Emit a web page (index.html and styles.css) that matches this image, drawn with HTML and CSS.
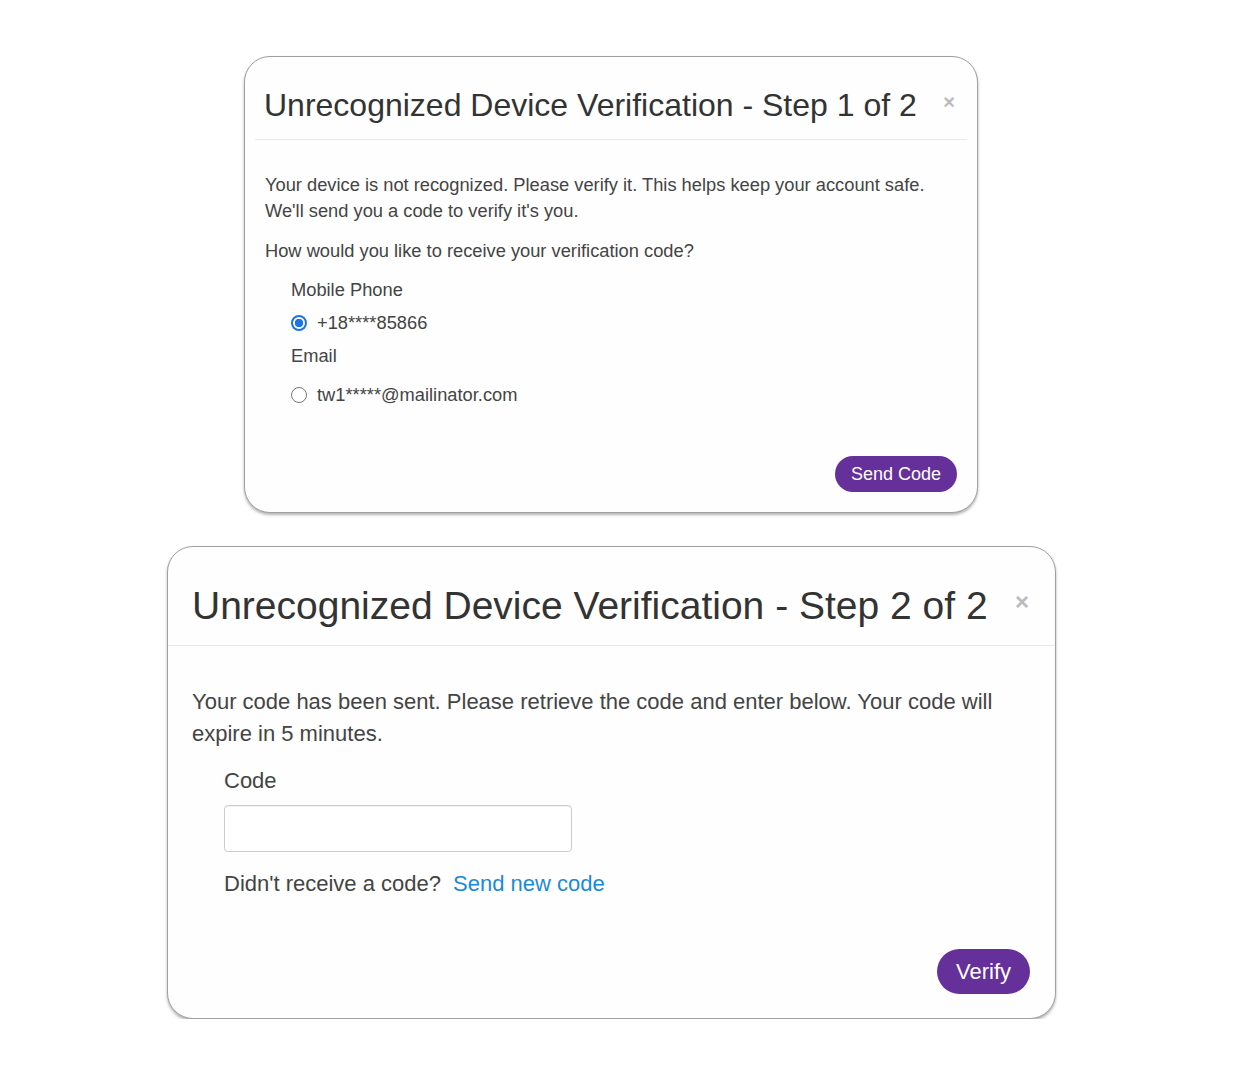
FILE: index.html
```html
<!DOCTYPE html>
<html lang="en">
<head>
    <meta charset="UTF-8">
    <meta name="viewport" content="width=device-width, initial-scale=1.0">
    <title>Unrecognized Device Verification</title>

    <link rel="stylesheet" href="styles.css">
</head>

<body>
    <div class="page">
        <!-- Step 1: choose where to send the code -->
        <div class="modal step-one">
            <div class="modal-header">
                <h2 class="modal-title">Unrecognized Device Verification - Step 1 of 2</h2>
                <span class="close">&times;</span>
            </div>
            <div class="modal-body">
                <p class="intro">Your device is not recognized. Please verify it. This helps keep your account safe.<br>We'll send you a code to verify it's you.</p>
                <p class="question">How would you like to receive your verification code?</p>

                <div class="options">
                    <div class="group-label">Mobile Phone</div>
                    <label class="option phone">
                        <input type="radio" name="method" value="sms" checked>
                        <span>+18****85866</span>
                    </label>
                    <div class="group-label">Email</div>
                    <label class="option email">
                        <input type="radio" name="method" value="email">
                        <span>tw1*****@mailinator.com</span>
                    </label>
                </div>

                <div class="actions">
                    <button class="button" type="button">Send Code</button>
                </div>
            </div>
        </div>

        <!-- Step 2: enter the code -->
        <div class="modal step-two">
            <div class="modal-header">
                <h2 class="modal-title">Unrecognized Device Verification - Step 2 of 2</h2>
                <span class="close">&times;</span>
            </div>
            <div class="modal-body">
                <p class="intro">Your code has been sent. Please retrieve the code and enter below. Your code will expire in 5 minutes.</p>

                <div class="code-field">
                    <label class="group-label" for="code">Code</label>
                    <input class="inputBox" type="text" id="code" name="code">
                    <p class="resend">Didn't receive a code? <a href="#">Send new code</a></p>
                </div>

                <div class="actions">
                    <button class="button" type="button">Verify</button>
                </div>
            </div>
        </div>
    </div>
</body>
</html>
```

FILE: styles.css
```css
body {
    font-family: 'Liberation Sans', Arial, sans-serif;
    margin: 0;
    background-color: #FFFFFF;
    color: #444;
}

.page {
    display: flex;
    flex-direction: column;
    align-items: flex-start;
    gap: 33px;
    padding-top: 56px;
}

.modal {
    box-sizing: border-box;
    background-color: #FEFEFE;
    border: 1px solid #A0A0A0;
    border-radius: 26px;
    box-shadow: 0 2px 3px rgba(0, 0, 0, 0.3);
}

.modal-header {
    display: flex;
    justify-content: space-between;
    align-items: center;
    border-bottom: 1px solid #E8E8E8;
}

.modal-title {
    margin: 0;
    font-weight: normal;
    color: #333;
}

.close {
    color: #BBB;
    font-weight: bold;
}

.modal-body p {
    margin: 0;
}

.group-label {
    display: block;
}

.option {
    display: flex;
    align-items: center;
    gap: 10px;
}

.option input {
    appearance: none;
    margin: 0;
    width: 16px;
    height: 16px;
    border: 1px solid #777;
    border-radius: 50%;
    background-color: #FFF;
}

.option input:checked {
    border: 2px solid #1A73E8;
    background: radial-gradient(circle, #1A73E8 0 4px, #FFF 4.5px);
}

.actions {
    display: flex;
    justify-content: flex-end;
}

.button {
    font-family: inherit;
    border: none;
    border-radius: 999px;
    background-color: #66309A;
    color: #FFF;
    cursor: pointer;
}

/* step 1 */
.step-one {
    width: 734px;
    margin-left: 244px;
    padding: 0 20px 20px;
}

.step-one .modal-header {
    margin: 0 -10px 0 -10px;
    padding: 30px 12px 16px 9px;
}

.step-one .modal-title {
    font-size: 32px;
    line-height: 36px;
}

.step-one .close {
    font-size: 20px;
    margin-bottom: 6px;
}

.step-one .modal-body {
    font-size: 18.3px;
    line-height: 26px;
}

.step-one .intro {
    margin-top: 32px;
}

.step-one .question {
    margin-top: 14px;
}

.step-one .options {
    padding-left: 26px;
    margin-top: 13px;
}

.step-one .option.phone {
    margin: 7px 0;
}

.step-one .option.email {
    margin-top: 13px;
}

.step-one .actions {
    margin-top: 48px;
}

.step-one .button {
    font-size: 18px;
    height: 36px;
    padding: 0 16px;
}

/* step 2 */
.step-two {
    width: 889px;
    margin-left: 167px;
    padding-bottom: 24px;
}

.step-two .modal-header {
    padding: 37px 26px 17px 24px;
}

.step-two .modal-title {
    font-size: 39px;
    line-height: 44px;
}

.step-two .close {
    font-size: 24px;
    margin-bottom: 9px;
}

.step-two .modal-body {
    padding: 0 25px 0 24px;
    font-size: 22px;
    line-height: 32px;
}

.step-two .intro {
    margin-top: 40px;
}

.code-field {
    padding-left: 32px;
    margin-top: 15px;
}

.inputBox {
    box-sizing: border-box;
    display: block;
    width: 348px;
    height: 47px;
    margin-top: 8px;
    border: 1px solid #CCC;
    border-radius: 4px;
    box-shadow: inset 0 1px 1px rgba(0, 0, 0, 0.06);
}

.resend {
    margin-top: 16px !important;
}

.resend a {
    color: #1B8AD6;
    text-decoration: none;
    margin-left: 6px;
}

.step-two .actions {
    margin-top: 49px;
}

.step-two .button {
    font-size: 22px;
    height: 45px;
    padding: 0 19px;
}
```
